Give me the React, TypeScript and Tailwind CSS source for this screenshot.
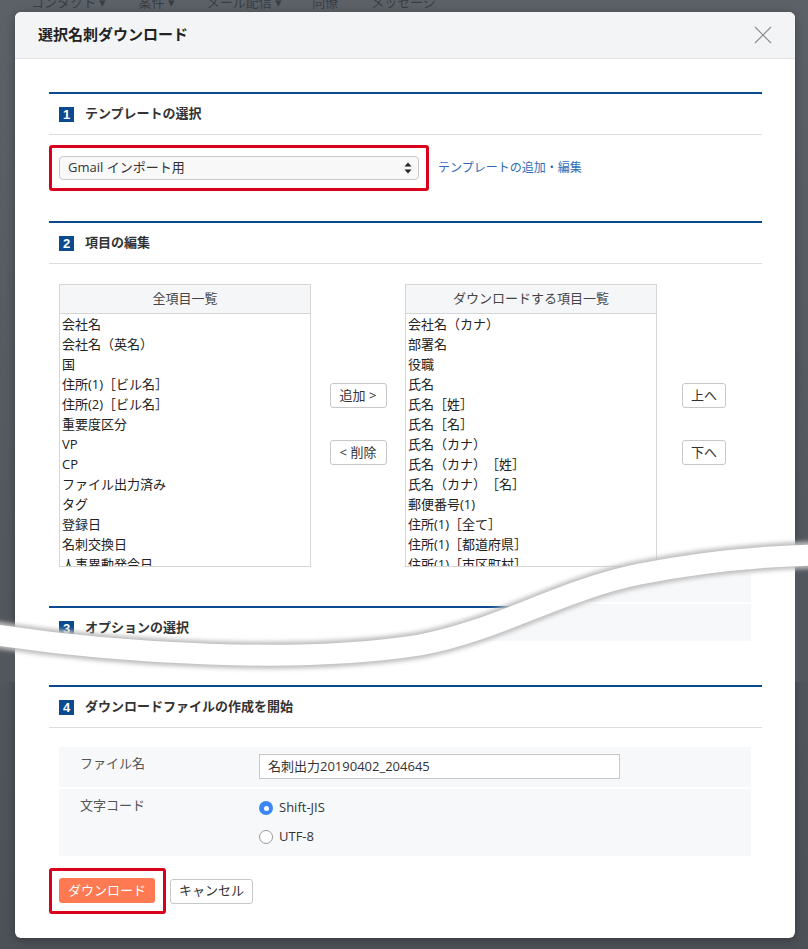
import React from "react";

function SectionHeader({ num, title }: { num: string; title: string }) {
  return (
    <div className="border-t-2 border-[#0b4a8e]">
      <div className="h-[41px] flex items-center border-b border-[#dddddd] pl-[10px]">
        <span className="w-[15px] h-[15px] bg-[#0b4a8e] text-white text-[13px] font-bold leading-none flex items-center justify-center [font-family:'Liberation_Sans',sans-serif]">
          {num}
        </span>
        <span className="ml-[11px] text-[13px] font-bold text-[#333333]">{title}</span>
      </div>
    </div>
  );
}

function ListBox({ title, items }: { title: string; items: string[] }) {
  return (
    <div className="w-[252px] border border-[#d6d6d6] bg-white">
      <div className="h-[29px] bg-[#f5f6f8] border-b border-[#d6d6d6] flex items-center justify-center text-[13px] text-[#444444]">
        {title}
      </div>
      <div className="h-[252px] overflow-hidden pl-[2px]">
        {items.map((it, i) => (
          <div key={i} className="h-[20px] leading-[20px] text-[13px] text-[#222222] whitespace-nowrap">
            {it}
          </div>
        ))}
      </div>
    </div>
  );
}

function SmallButton({ children, w }: { children: React.ReactNode; w: string }) {
  return (
    <div
      className={`${w} h-[25px] border border-[#c8c8c8] rounded-[3px] bg-white flex items-center justify-center text-[13px] text-[#333333] whitespace-pre`}
    >
      {children}
    </div>
  );
}

const leftItems = [
  "会社名",
  "会社名（英名）",
  "国",
  "住所(1)［ビル名］",
  "住所(2)［ビル名］",
  "重要度区分",
  "VP",
  "CP",
  "ファイル出力済み",
  "タグ",
  "登録日",
  "名刺交換日",
  "人事異動発令日",
];

const rightItems = [
  "会社名（カナ）",
  "部署名",
  "役職",
  "氏名",
  "氏名［姓］",
  "氏名［名］",
  "氏名（カナ）",
  "氏名（カナ）［姓］",
  "氏名（カナ）［名］",
  "郵便番号(1)",
  "住所(1)［全て］",
  "住所(1)［都道府県］",
  "住所(1)［市区町村］",
];

const WAVE =
  "M -10 104 C 120 124, 300 134, 420 115 C 500 100, 560 60, 640 44 C 700 32, 760 26, 820 25";

export default function App() {
  return (
    <div className="relative w-[808px] h-[949px] overflow-hidden bg-linear-to-b from-[#5c6168] to-[#4c5158] [font-family:'Open_Sans','Noto_Sans_CJK_JP',sans-serif] [text-spacing-trim:space-all]">
      {/* background page (dimmed) */}
      <div className="flex -mt-[6px] pl-[31px] text-[13px] leading-[16px] text-[#383c42] whitespace-nowrap">
        <span>コンタクト ▾</span>
        <span className="ml-[32px]">案件 ▾</span>
        <span className="ml-[32px]">メール配信 ▾</span>
        <span className="ml-[30px]">同僚</span>
        <span className="ml-[33px]">メッセージ</span>
      </div>

      {/* modal */}
      <div className="absolute left-[15px] top-[12px] w-[780px] h-[926px] bg-white rounded-[6px] overflow-hidden shadow-[0_2px_10px_rgba(0,0,0,0.3)]">
        <div className="h-[47px] bg-[#f3f4f6] border-b border-[#dfe1e5] flex items-center justify-between pl-[23px] pr-[23px] pb-[2px]">
          <span className="text-[15px] font-bold text-[#222222]">選択名刺ダウンロード</span>
          <svg width="18" height="18" viewBox="0 0 18 18" className="mt-[2px]">
            <line x1="1" y1="1" x2="17" y2="17" stroke="#8a8a8a" strokeWidth="1.1" />
            <line x1="17" y1="1" x2="1" y2="17" stroke="#8a8a8a" strokeWidth="1.1" />
          </svg>
        </div>

        <div className="pl-[34px] pr-[33px] pt-[33px]">
          {/* section 1 */}
          <SectionHeader num="1" title="テンプレートの選択" />
          <div className="mt-[10px] flex items-center">
            <div className="w-[380px] border-[3px] border-[#d9001b] rounded-[3px] px-[7px] py-[8px]">
              <div className="h-[24px] w-full rounded-[4px] border border-[#c9c9c9] bg-[#f8f8f8] flex items-center justify-between pl-[8px] pr-[6px]">
                <span className="text-[13px] text-[#333333]">Gmail インポート用</span>
                <svg width="8" height="14" viewBox="0 0 8 14">
                  <polygon points="4,1.5 7.5,5.5 0.5,5.5" fill="#222" />
                  <polygon points="0.5,8.5 7.5,8.5 4,12.5" fill="#222" />
                </svg>
              </div>
            </div>
            <span className="ml-[9px] text-[12px] text-[#2e6db4]">テンプレートの追加・編集</span>
          </div>

          {/* section 2 */}
          <div className="mt-[30px]">
            <SectionHeader num="2" title="項目の編集" />
          </div>
          <div className="mt-[20px] flex items-start pl-[10px]">
            <ListBox title="全項目一覧" items={leftItems} />
            <div className="w-[94px] flex flex-col items-center pt-[99px] gap-[32px]">
              <SmallButton w="w-[57px]">{"追加 >"}</SmallButton>
              <SmallButton w="w-[57px]">{"< 削除"}</SmallButton>
            </div>
            <ListBox title="ダウンロードする項目一覧" items={rightItems} />
            <div className="ml-[25px] flex flex-col pt-[99px] gap-[32px]">
              <SmallButton w="w-[44px]">上へ</SmallButton>
              <SmallButton w="w-[44px]">下へ</SmallButton>
            </div>
          </div>

          {/* section 3 */}
          <div className="mt-[39px]">
            <SectionHeader num="3" title="オプションの選択" />
          </div>

          {/* section 4 */}
          <div className="mt-[36px]">
            <SectionHeader num="4" title="ダウンロードファイルの作成を開始" />
          </div>
          <div className="mt-[19px] ml-[10px] mr-[11px]">
            <div className="h-[40px] bg-[#f7f8fa] flex">
              <div className="w-[200px] pl-[21px] pt-[7px] text-[13px] text-[#555555]">ファイル名</div>
              <div className="pt-[7px]">
                <div className="w-[361px] h-[25px] border border-[#c8c8c8] bg-white flex items-center px-[8px] text-[13px] text-[#333333]">
                  名刺出力20190402_204645
                </div>
              </div>
            </div>
            <div className="mt-[2px] h-[67px] bg-[#f7f8fa] flex">
              <div className="w-[200px] pl-[21px] pt-[7px] text-[13px] text-[#555555]">文字コード</div>
              <div className="pt-[9px] flex flex-col gap-[9px]">
                <div className="h-[20px] flex items-center">
                  <span className="w-[14px] h-[14px] rounded-full bg-[#3b86f7] flex items-center justify-center">
                    <span className="w-[5px] h-[5px] rounded-full bg-white" />
                  </span>
                  <span className="ml-[6px] text-[13px] text-[#333333]">Shift-JIS</span>
                </div>
                <div className="h-[20px] flex items-center">
                  <span className="w-[14px] h-[14px] rounded-full border border-[#9a9a9a] bg-white" />
                  <span className="ml-[6px] text-[13px] text-[#333333]">UTF-8</span>
                </div>
              </div>
            </div>
          </div>

          {/* footer buttons */}
          <div className="mt-[12px] flex items-center">
            <div className="border-[3px] border-[#d9001b] rounded-[3px] pt-[7px] pb-[8px] pl-[7px] pr-[8px]">
              <div className="w-[96px] h-[25px] bg-[#ff7a53] rounded-[3px] flex items-center justify-center text-[13px] text-white">
                ダウンロード
              </div>
            </div>
            <div className="ml-[4px]">
              <SmallButton w="w-[83px]">キャンセル</SmallButton>
            </div>
          </div>
        </div>
      </div>

      {/* torn-image wave overlay */}
      <svg
        className="absolute left-0 top-[530px] pointer-events-none"
        width="808"
        height="152"
        viewBox="0 0 808 152"
      >
        <defs>
          <clipPath id="lowerPart">
            <path d={WAVE + " L 820 160 L -10 160 Z"} />
          </clipPath>
          <filter id="waveBlur" x="-5%" y="-50%" width="110%" height="200%">
            <feGaussianBlur stdDeviation="2" />
          </filter>
        </defs>
        <g clipPath="url(#lowerPart)">
          <rect x="0" y="0" width="808" height="152" fill="#52575e" />
          <rect x="15" y="0" width="780" height="152" fill="#ffffff" />
          <rect x="59" y="37" width="692" height="35" fill="#f7f8fa" />
          <rect x="59" y="74" width="692" height="37" fill="#f7f8fa" />
        </g>
        <path d={WAVE} stroke="#bdbdbd" strokeWidth="27" fill="none" filter="url(#waveBlur)" />
        <path d={WAVE} stroke="#ffffff" strokeWidth="21" fill="none" />
      </svg>
    </div>
  );
}
